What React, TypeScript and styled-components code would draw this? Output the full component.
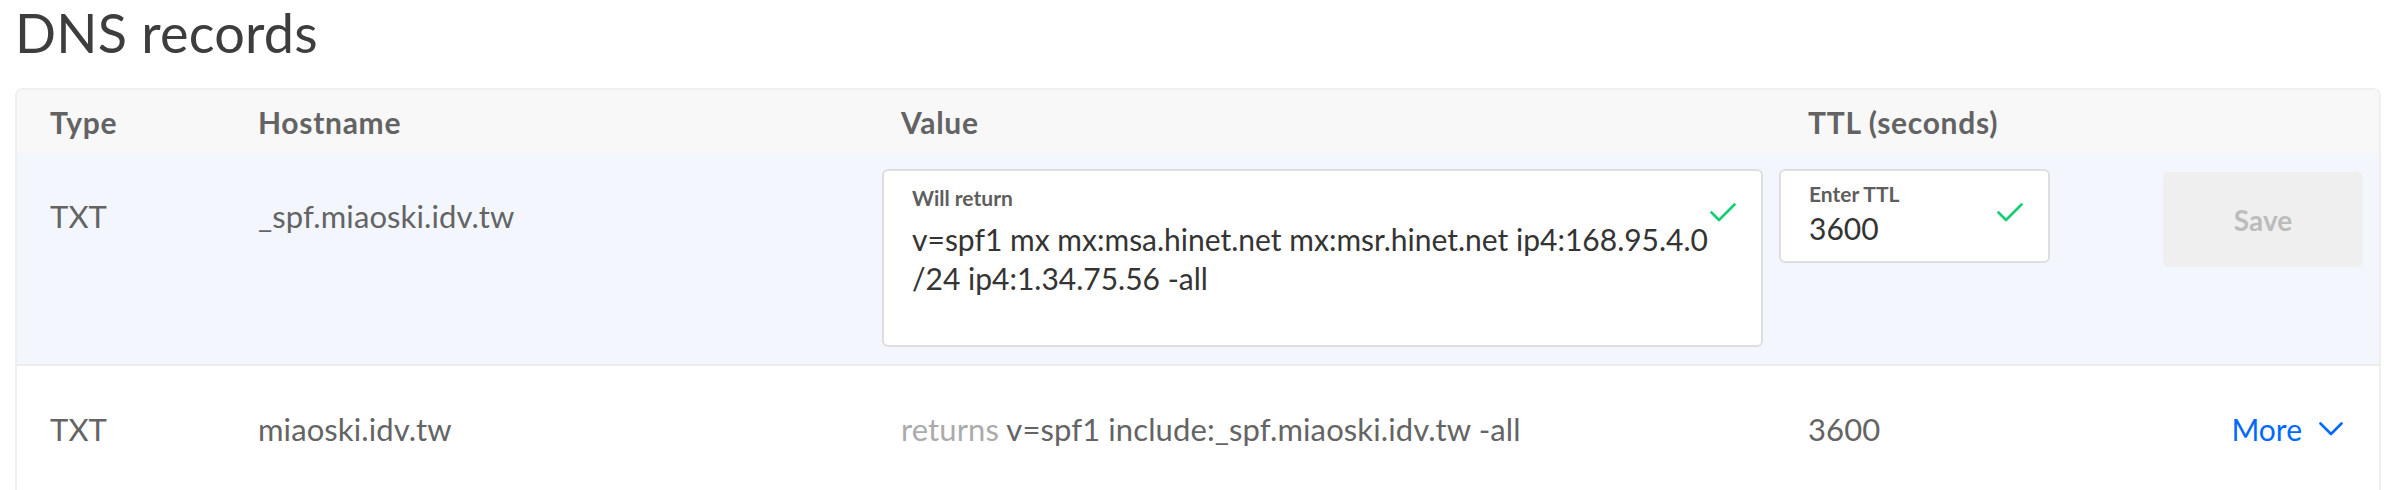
import React from "react";
import styled, { createGlobalStyle } from "styled-components";

const Global = createGlobalStyle`
  html, body { margin: 0; padding: 0; background: #ffffff; }
  body { font-family: Lato, "Open Sans", Arial, sans-serif; -webkit-font-smoothing: antialiased; }
  * { box-sizing: border-box; }
`;

const Page = styled.div`
  padding: 1px 23px 0 15px;
  width: 2404px;
`;

const Title = styled.h1`
  margin: 0 0 23px 0;
  font-family: Lato, sans-serif;
  font-weight: 400;
  font-size: 54px;
  line-height: 64px;
  letter-spacing: 0.2px;
  color: #3d3d3d;
`;

const Card = styled.div`
  border: 2px solid #efefef;
  border-bottom: none;
  border-radius: 8px 8px 0 0;
  overflow: hidden;
  background: #ffffff;
`;

const Grid = styled.div<{ $tone?: "head" | "active" | "plain" }>`
  display: grid;
  grid-template-columns: 241px 624px 897px 384px 1fr;
  background: ${(p) =>
    p.$tone === "head" ? "#f8f8f8" : p.$tone === "active" ? "#f3f7fd" : "#ffffff"};
`;

const HeaderRow = styled(Grid)`
  height: 63px;
  align-items: center;
`;

const HeadCell = styled.div<{ $indent: number }>`
  padding-left: ${(p) => p.$indent}px;
  font-size: 30px;
  font-weight: 700;
  letter-spacing: 0.7px;
  color: #636363;
  line-height: 40px;
`;

const EditRow = styled(Grid)`
  padding: 16px 0 17px 0;
  border-bottom: 2px solid #ececec;
  align-items: start;
`;

const ViewRow = styled(Grid)`
  height: 126px;
  align-items: center;
`;

const Cell = styled.div<{ $indent: number; $top?: number }>`
  padding-left: ${(p) => p.$indent}px;
  padding-top: ${(p) => p.$top ?? 0}px;
  font-size: 31px;
  line-height: 40px;
  letter-spacing: 0.1px;
  color: #646464;
  white-space: nowrap;
`;

const Muted = styled.span`
  color: #ababab;
`;

const Field = styled.div<{ $w: number; $h: number; $pt: number }>`
  position: relative;
  width: ${(p) => p.$w}px;
  height: ${(p) => p.$h}px;
  padding: ${(p) => p.$pt}px 0 0 28px;
  background: #ffffff;
  border: 2px solid #dedede;
  border-radius: 6px;
`;

const FieldLabel = styled.div<{ $gap: number }>`
  font-size: 21px;
  line-height: 24px;
  font-weight: 700;
  color: #5e5e5e;
  margin-bottom: ${(p) => p.$gap}px;
`;

const FieldValue = styled.div`
  font-size: 30px;
  line-height: 39px;
  color: #343434;
  white-space: nowrap;
`;

const Check = styled.svg`
  position: absolute;
  top: 32px;
  right: 25px;
  width: 26px;
  height: 19px;
`;

const SaveButton = styled.button`
  margin-top: 3px;
  width: 200px;
  height: 95px;
  border: none;
  border-radius: 6px;
  background: #efefef;
  color: #bcbcbc;
  font-family: Lato, sans-serif;
  font-size: 28px;
  font-weight: 700;
  padding: 0;
`;

const ActionCell = styled.div`
  display: flex;
  justify-content: flex-end;
  padding-right: 36px;
`;

const MoreLink = styled.a`
  display: inline-flex;
  align-items: center;
  gap: 17px;
  font-size: 30px;
  line-height: 40px;
  color: #0069ff;
  text-decoration: none;
`;

const CheckMark = () => (
  <Check viewBox="0 0 26 19" fill="none">
    <polyline
      points="1.5,9.5 9,17 24.5,1.5"
      stroke="#15cd72"
      strokeWidth="2.6"
      strokeLinecap="round"
      strokeLinejoin="round"
    />
  </Check>
);

const Chevron = () => (
  <svg width="24" height="14" viewBox="0 0 24 14" fill="none">
    <polyline
      points="1.5,1.5 12,12 22.5,1.5"
      stroke="#0069ff"
      strokeWidth="2.6"
      strokeLinecap="round"
      strokeLinejoin="round"
    />
  </svg>
);

export default function App() {
  return (
    <>
      <Global />
      <Page>
        <Title>DNS records</Title>
        <Card>
          <HeaderRow $tone="head">
            <HeadCell $indent={33}>Type</HeadCell>
            <HeadCell $indent={0}>Hostname</HeadCell>
            <HeadCell $indent={19}>Value</HeadCell>
            <HeadCell $indent={29}>TTL (seconds)</HeadCell>
            <HeadCell $indent={0} />
          </HeaderRow>
          <EditRow $tone="active">
            <Cell $indent={33} $top={27}>TXT</Cell>
            <Cell $indent={0} $top={27}>_spf.miaoski.idv.tw</Cell>
            <div>
              <Field $w={881} $h={178} $pt={15}>
                <FieldLabel $gap={10}>Will return</FieldLabel>
                <FieldValue>
                  v=spf1 mx mx:msa.hinet.net mx:msr.hinet.net ip4:168.95.4.0
                  <br />
                  /24 ip4:1.34.75.56 -all
                </FieldValue>
                <CheckMark />
              </Field>
            </div>
            <div>
              <Field $w={271} $h={94} $pt={11}>
                <FieldLabel $gap={3}>Enter TTL</FieldLabel>
                <FieldValue>3600</FieldValue>
                <CheckMark />
              </Field>
            </div>
            <div>
              <SaveButton type="button">Save</SaveButton>
            </div>
          </EditRow>
          <ViewRow $tone="plain">
            <Cell $indent={33}>TXT</Cell>
            <Cell $indent={0}>miaoski.idv.tw</Cell>
            <Cell $indent={19}>
              <Muted>returns</Muted> v=spf1 include:_spf.miaoski.idv.tw -all
            </Cell>
            <Cell $indent={29}>3600</Cell>
            <ActionCell>
              <MoreLink href="#">
                More
                <Chevron />
              </MoreLink>
            </ActionCell>
          </ViewRow>
        </Card>
      </Page>
    </>
  );
}
